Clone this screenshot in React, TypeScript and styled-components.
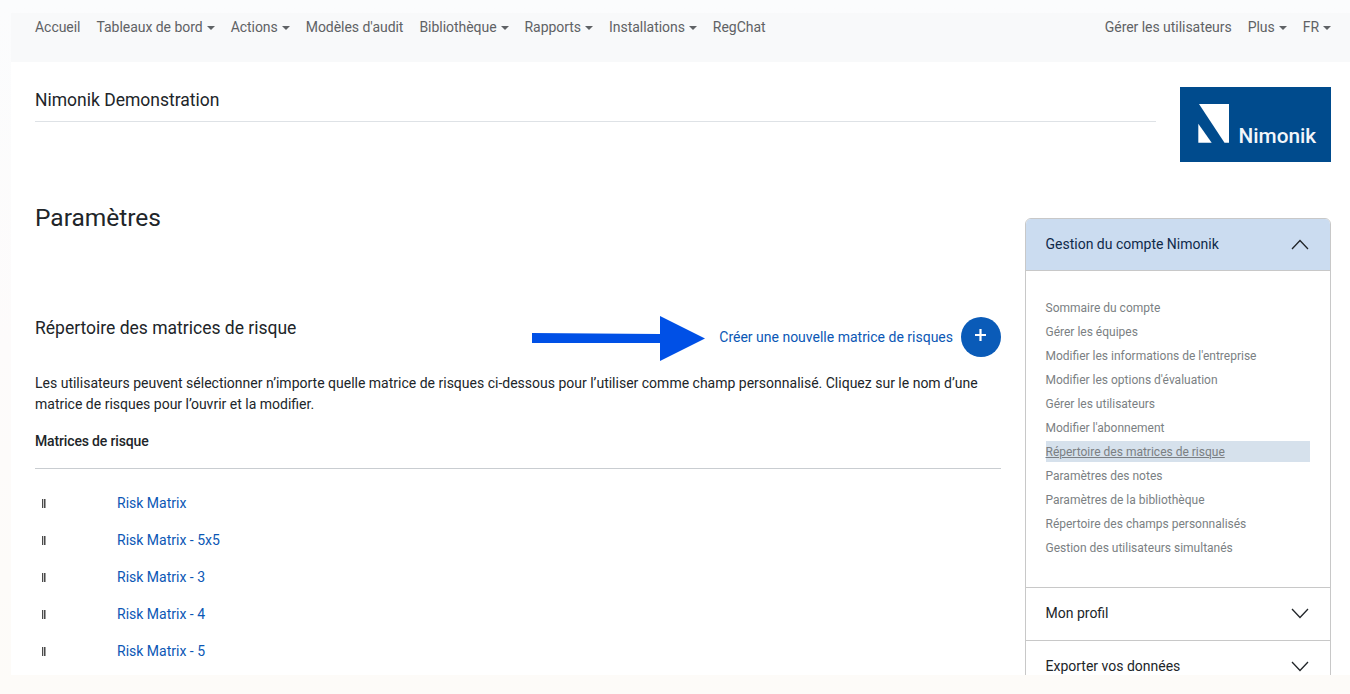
import React from "react";
import styled, { createGlobalStyle } from "styled-components";

const Global = createGlobalStyle`
  html, body { margin: 0; padding: 0; height: 694px; overflow: hidden; }
  body { font-family: Roboto, "Liberation Sans", sans-serif; font-size: 14px; line-height: 21px; color: #212529; }
  * { box-sizing: border-box; }
`;

const Page = styled.div`
  height: 694px;
  padding: 13px 0 19px 11px;
  background: linear-gradient(180deg, #fbfcfd 0%, #fdfbfb 50%, #fdfbf8 100%);
`;
const Panel = styled.div`
  height: 662px;
  overflow: hidden;
  background: #fff;
`;
const Nav = styled.nav`
  height: 49px;
  padding: 4px 11px 0 16px;
  display: flex;
  justify-content: space-between;
  background: #f8f9fa;
`;
const NavGroup = styled.div`
  display: flex;
`;
const NavItem = styled.a<{ $caret?: boolean }>`
  padding: 0 8px;
  height: 21px;
  color: #5f6265;
  white-space: nowrap;
  letter-spacing: -0.04px;
  ${(p) =>
    p.$caret &&
    `&::after {
      content: "";
      display: inline-block;
      margin-left: 4px;
      vertical-align: 2.5px;
      border-top: 4px solid #5f6265;
      border-left: 4px solid transparent;
      border-right: 4px solid transparent;
    }`}
`;
const Content = styled.main`
  padding: 25px 19px 0 24px;
`;
const Header = styled.header`
  display: flex;
  gap: 24px;
  align-items: flex-start;
`;
const OrgBlock = styled.div`
  flex: 1;
  height: 35px;
  padding-top: 1px;
  border-bottom: 1px solid #dee2e6;
`;
const OrgName = styled.div`
  font-size: 17.5px;
  line-height: 25px;
`;
const Logo = styled.svg`
  display: block;
  width: 151px;
  height: 75px;
`;
const LogoText = styled.text`
  font-family: Roboto, "Liberation Sans", sans-serif;
  font-size: 20.8px;
  font-weight: 500;
  fill: #f2f6fa;
`;
const Columns = styled.div`
  display: flex;
  gap: 24px;
  align-items: flex-start;
`;
const Main = styled.section`
  width: 966px;
  margin-top: 39px;
`;
const Title = styled.h1`
  margin: 0;
  font-size: 24.5px;
  line-height: 33px;
  font-weight: 400;
`;
const SectionBar = styled.div`
  margin-top: 78px;
  height: 41px;
  display: flex;
  align-items: flex-start;
`;
const SectionTitle = styled.h2`
  margin: 0;
  padding-top: 4px;
  font-size: 17.5px;
  line-height: 25px;
  font-weight: 400;
`;
const CreateGroup = styled.div`
  margin-left: auto;
  display: flex;
  align-items: center;
`;
const Arrow = styled.svg`
  display: block;
  width: 174px;
  height: 46px;
  margin: 4px 14px 0 0;
`;
const CreateLink = styled.a`
  color: #0b57b5;
  white-space: nowrap;
  margin-right: 8px;
`;
const PlusButton = styled.button`
  width: 40px;
  height: 40px;
  padding: 0;
  border: 0;
  border-radius: 50%;
  background: #0a5bb8;
  color: #fff;
  display: flex;
  align-items: center;
  justify-content: center;
`;
const PlusIcon = styled.svg`
  display: block;
  width: 11px;
  height: 12px;
  margin: 0 1px 4px 0;
`;
const Intro = styled.p`
  margin: 20px 0 0;
`;
const ListLabel = styled.div`
  margin-top: 16px;
  padding-bottom: 16px;
  font-weight: 500;
  letter-spacing: -0.15px;
  border-bottom: 1px solid #c9cdd1;
`;
const MatrixList = styled.ul`
  list-style: none;
  margin: 16px 0 0;
  padding: 0;
`;
const MatrixRow = styled.li`
  height: 37px;
  display: flex;
  align-items: center;
`;
const Handle = styled.span`
  width: 4px;
  height: 9px;
  margin: 0 0 0 7px;
  background: linear-gradient(90deg, #4a4a4a 0 1px, #d0d0d0 1px 2px, #4a4a4a 2px 3px, #a0a0a0 3px 4px);
`;
const MatrixLink = styled.a`
  margin-left: 71px;
  color: #0b57b5;
`;
const Sidebar = styled.aside`
  width: 306px;
  margin-top: 56px;
  border: 1px solid #c8c8c8;
  border-radius: 6px 6px 0 0;
  overflow: hidden;
`;
const AccordionHead = styled.div<{ $open?: boolean }>`
  height: ${(p) => (p.$open ? 52 : 53)}px;
  padding: ${(p) => (p.$open ? "0" : "0 0 2px 0")};
  padding-left: 19.5px;
  padding-right: 21px;
  display: flex;
  align-items: center;
  justify-content: space-between;
  color: ${(p) => (p.$open ? "#0f2a4a" : "#212529")};
  background: ${(p) => (p.$open ? "#cbdcf0" : "#fff")};
  border-top: ${(p) => (p.$open ? "0" : "1px solid #c8c8c8")};
  border-bottom: ${(p) => (p.$open ? "1px solid #c8c8c8" : "0")};
`;
const AccordionBody = styled.div`
  padding: 25px 20px 27px 19.5px;
`;
const SideLink = styled.a<{ $active?: boolean }>`
  display: block;
  height: 24px;
  font-size: 12px;
  line-height: 24px;
  color: #7b7f83;
  ${(p) =>
    p.$active &&
    `background: linear-gradient(#fff 0 1px, #d6e1ec 1px 22px, #fff 22px);
     text-decoration: underline;`}
`;
const Chevron = styled.svg`
  display: block;
  width: 18px;
  height: 11px;
  fill: none;
  stroke: #212529;
  stroke-width: 1.3;
`;

const Caret = ({ up }: { up?: boolean }) => (
  <Chevron viewBox="0 0 18 11">
    <polyline points={up ? "1,10 9,1.5 17,10" : "1,1 9,9.5 17,1"} />
  </Chevron>
);

const links = [
  "Sommaire du compte",
  "Gérer les équipes",
  "Modifier les informations de l'entreprise",
  "Modifier les options d'évaluation",
  "Gérer les utilisateurs",
  "Modifier l'abonnement",
  "Répertoire des matrices de risque",
  "Paramètres des notes",
  "Paramètres de la bibliothèque",
  "Répertoire des champs personnalisés",
  "Gestion des utilisateurs simultanés",
];
const matrices = ["Risk Matrix", "Risk Matrix - 5x5", "Risk Matrix - 3", "Risk Matrix - 4", "Risk Matrix - 5"];

export default function App() {
  return (
    <Page>
      <Global />
      <Panel>
        <Nav>
          <NavGroup>
            <NavItem>Accueil</NavItem>
            <NavItem $caret>Tableaux de bord</NavItem>
            <NavItem $caret>Actions</NavItem>
            <NavItem>Modèles d'audit</NavItem>
            <NavItem $caret>Bibliothèque</NavItem>
            <NavItem $caret>Rapports</NavItem>
            <NavItem $caret>Installations</NavItem>
            <NavItem>RegChat</NavItem>
          </NavGroup>
          <NavGroup>
            <NavItem>Gérer les utilisateurs</NavItem>
            <NavItem $caret>Plus</NavItem>
            <NavItem $caret>FR</NavItem>
          </NavGroup>
        </Nav>
        <Content>
          <Header>
            <OrgBlock>
              <OrgName>Nimonik Demonstration</OrgName>
            </OrgBlock>
            <Logo viewBox="0 0 151 75">
              <rect width="151" height="75" fill="#004b8d" />
              <polygon points="19,17 49,17 49,55.7 44.5,55.7" fill="#fff" />
              <polygon points="18.3,36.7 31.7,55.7 18.3,55.7" fill="#fff" />
              <LogoText x="58.5" y="55.7">Nimonik</LogoText>
            </Logo>
          </Header>
          <Columns>
            <Main>
              <Title>Paramètres</Title>
              <SectionBar>
                <SectionTitle>Répertoire des matrices de risque</SectionTitle>
                <CreateGroup>
                  <Arrow viewBox="0 0 174 46">
                    <polygon points="1,17 129,18 129,0 174,22.5 129,45 129,27 1,27" fill="#0050e6" />
                  </Arrow>
                  <CreateLink>Créer une nouvelle matrice de risques</CreateLink>
                  <PlusButton aria-label="Créer">
                    <PlusIcon viewBox="0 0 11 12">
                      <path d="M5.5 0v12M0 6h11" stroke="#fff" strokeWidth="2.2" />
                    </PlusIcon>
                  </PlusButton>
                </CreateGroup>
              </SectionBar>
              <Intro>
                Les utilisateurs peuvent sélectionner n’importe quelle matrice de risques ci-dessous pour l’utiliser comme champ personnalisé. Cliquez sur le nom d’une matrice de risques pour l’ouvrir et la modifier.
              </Intro>
              <ListLabel>Matrices de risque</ListLabel>
              <MatrixList>
                {matrices.map((m) => (
                  <MatrixRow key={m}>
                    <Handle />
                    <MatrixLink>{m}</MatrixLink>
                  </MatrixRow>
                ))}
              </MatrixList>
            </Main>
            <Sidebar>
              <AccordionHead $open>
                Gestion du compte Nimonik
                <Caret up />
              </AccordionHead>
              <AccordionBody>
                {links.map((l, i) => (
                  <SideLink key={l} $active={i === 6}>{l}</SideLink>
                ))}
              </AccordionBody>
              <AccordionHead>
                Mon profil
                <Caret />
              </AccordionHead>
              <AccordionHead>
                Exporter vos données
                <Caret />
              </AccordionHead>
            </Sidebar>
          </Columns>
        </Content>
      </Panel>
    </Page>
  );
}
